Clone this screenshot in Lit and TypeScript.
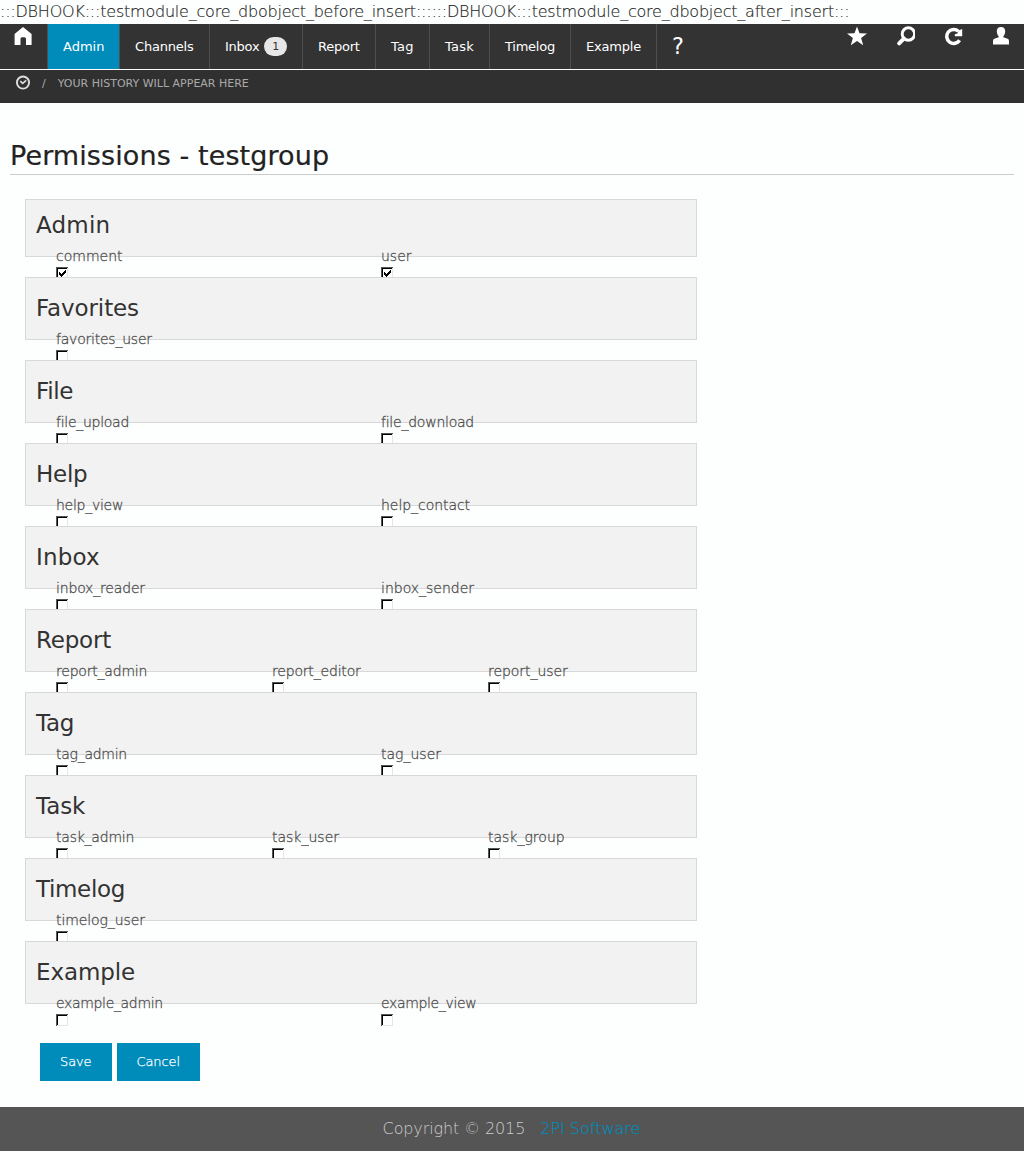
import { LitElement, html, css, svg } from "lit";
import { customElement, property } from "lit/decorators.js";
import { classMap } from "lit/directives/class-map.js";
import { styleMap } from "lit/directives/style-map.js";

interface NavItem { label: string; width: number; tracking: number; badge?: number; active?: boolean; }
interface Permission { name: string; tracking: number; granted: boolean; }
interface Group { title: string; tracking: number; permissions: Permission[]; }

const NAV: NavItem[] = [
  { label: "Admin", width: 72, tracking: 0, active: true },
  { label: "Channels", width: 90, tracking: -0.2 },
  { label: "Inbox", width: 93, tracking: -0.25, badge: 1 },
  { label: "Report", width: 73, tracking: -0.25 },
  { label: "Tag", width: 54, tracking: 0.3 },
  { label: "Task", width: 60, tracking: 0.2 },
  { label: "Timelog", width: 81, tracking: -0.25 },
  { label: "Example", width: 86, tracking: -0.2 },
];

const group = (title: string, tracking: number, entries: [string, number][], granted = false): Group => ({
  title,
  tracking,
  permissions: entries.map(([name, spacing]) => ({ name, tracking: spacing, granted })),
});

const GROUPS: Group[] = [
  group("Admin", 0.2, [["comment", 0], ["user", 0]], true),
  group("Favorites", -0.1, [["favorites_user", -0.22]]),
  group("File", -0.35, [["file_upload", -0.27], ["file_download", -0.23]]),
  group("Help", -0.25, [["help_view", -0.27], ["help_contact", -0.05]]),
  group("Inbox", 0.2, [["inbox_reader", -0.17], ["inbox_sender", 0]]),
  group("Report", -0.2, [["report_admin", -0.2], ["report_editor", -0.18], ["report_user", -0.05]]),
  group("Tag", -0.3, [["tag_admin", -0.27], ["tag_user", 0]]),
  group("Task", -0.1, [["task_admin", -0.22], ["task_user", 0], ["task_group", 0]]),
  group("Timelog", -0.35, [["timelog_user", -0.1]]),
  group("Example", -0.1, [["example_admin", -0.33], ["example_view", -0.35]]),
];

const ICONS: Record<string, unknown> = {
  home: svg`<path d="M10 1 L18.6 8 V19 H13 V13 Q13 11.2 11.5 11.2 H9 Q7.5 11.2 7.5 13 V19 H1.6 V8 Z"/>`,
  star: svg`<path d="M10 .4 L12.5 7.3 L20 7.5 L14.1 12 L16.2 19.3 L10 15.1 L3.8 19.3 L5.9 12 L0 7.5 L7.5 7.3 Z"/>`,
  search: svg`<circle cx="13.4" cy="8" r="6.2" fill="none" stroke="currentColor" stroke-width="2.9"/><path d="M8.8 12.6 L4.2 17.4" stroke="currentColor" stroke-width="3.9" stroke-linecap="round"/>`,
  refresh: svg`<path d="M16.6 14.2 A7 7 0 1 1 15.4 5.2" fill="none" stroke="currentColor" stroke-width="3.5"/><path d="M19.2 3 V10.2 H11.8 V8.2 L14.4 7.4 L15.6 4.4 Z"/>`,
  user: svg`<path d="M10 1 C12.9 1 14.3 2.9 14.2 5.4 C14.1 7.6 13.2 9.3 12.3 10.4 V11.2 L16.6 12.7 Q18 13.3 18 15 V18.6 H2 V15 Q2 13.3 3.4 12.7 L7.7 11.2 V10.4 C6.8 9.3 5.9 7.6 5.8 5.4 C5.7 2.9 7.1 1 10 1 Z"/>`,
  clock: svg`<circle cx="10" cy="9.4" r="7.6" fill="none" stroke="currentColor" stroke-width="2.4"/><path d="M6.6 7.6 L9.6 10.4 L14 6.6" fill="none" stroke="currentColor" stroke-width="2.1"/>`,
};

const icon = (name: string) =>
  html`<svg class="icon" viewBox="0 0 20 20" fill="currentColor" aria-hidden="true">${ICONS[name]}</svg>`;

const tracked = (value: number) => styleMap({ letterSpacing: `${value}px` });

@customElement("permission-box")
export class PermissionBox extends LitElement {
  @property({ type: Boolean }) checked = false;

  static styles = css`
    :host { display: block; width: 12px; height: 12px; }
    .box { display: block; }
  `;

  render() {
    return html`<svg class="box" width="12" height="12" shape-rendering="crispEdges">
      <rect width="12" height="12" fill="#e5e5e5" />
      <path d="M0 0H12V1H1V12H0Z" fill="#555" />
      <path d="M1 1H11V2H2V11H1Z" fill="#000" />
      <rect x="2" y="2" width="9" height="9" fill="#fff" />
      ${this.checked
        ? svg`<path d="M3 5H4V6H5V7H6V6H7V5H8V4H9V3H10V6H9V7H8V8H7V9H6V10H5V9H4V8H3Z" fill="#000"/>`
        : null}
    </svg>`;
  }
}

@customElement("app-root")
export class AppRoot extends LitElement {
  static styles = css`
    :host {
      display: block;
      height: 1151px;
      background: #fdfffe;
      color: #222;
      font-family: "DejaVu Sans", sans-serif;
      font-size: 16px;
    }
    * { box-sizing: border-box; }
    .page { display: flex; flex-direction: column; height: 100%; }
    .hook {
      height: 24px; line-height: 24px; font-weight: 200; white-space: nowrap;
      letter-spacing: -0.22px; -webkit-text-stroke: 0.15px #222;
    }
    .topbar { display: flex; height: 45px; background: #333; color: #fff; }
    .icon { display: block; width: 20px; height: 20px; }
    .home { width: 48px; padding: 2px 0 0 13px; border-right: 1px solid #4e4e4e; }
    .item {
      display: flex; flex: none; align-items: center; height: 45px; padding-left: 15px;
      border-right: 1px solid #4e4e4e; font-size: 13px; white-space: nowrap;
    }
    .item.active { background: #008cba; }
    .badge {
      margin-left: 5px; width: 23px; height: 19px; border-radius: 10px; background: #e7e7e7;
      color: #333; font-size: 11px; line-height: 20px; text-align: center;
    }
    .help { padding: 0 16px 0 15px; font-size: 22.5px; line-height: 45px; }
    .tools { display: flex; gap: 28px; margin-left: auto; padding: 2px 13px 0 0; }
    .history {
      display: flex; height: 34px; padding: 5px 0 0 15px; border-top: 1px solid #fdfffe;
      background: #303030; color: #aaa; font-size: 11px; line-height: 17px;
    }
    .history .icon { width: 16px; height: 16px; color: #ddd; }
    .slash { margin: 0 12px 0 11px; }
    .content { flex: 1; padding: 36px 10px 0; }
    .heading {
      margin: 0 0 24px; height: 36px; border-bottom: 1px solid #ccc;
      font-size: 27px; line-height: 33px; font-weight: 400; letter-spacing: 0.1px;
      -webkit-text-stroke: 0.2px #222;
    }
    .groups { display: flex; flex-direction: column; gap: 20px; width: 672px; margin-left: 15px; }
    .group {
      position: relative; height: 63px; padding: 14px 0 0 10px;
      border: 1px solid #d8d8d8; background: #f2f2f2;
    }
    .group:first-child { height: 58px; padding-top: 9px; }
    .title { margin: 0; height: 32px; font-size: 23px; line-height: 32px; font-weight: 400; color: #333; }
    .list {
      display: grid; grid-auto-flow: column; grid-auto-columns: 1fr; width: 650px;
      margin: 5px 0 0 10px; padding: 0; list-style: none;
    }
    .list.thirds { grid-auto-columns: 216px; }
    .entry { padding-left: 10px; }
    .label {
      height: 21px; font-size: 14px; line-height: 21px; font-weight: 200; color: #4d4d4d;
      -webkit-text-stroke: 0.28px #4d4d4d;
    }
    .actions { display: flex; gap: 5px; margin: 39px 0 0 30px; }
    .button {
      height: 38px; padding: 0 20px; border: 0; background: #008cba; color: #fff;
      font: 200 13px/38px "DejaVu Sans", sans-serif; letter-spacing: -0.1px;
      -webkit-text-stroke: 0.25px #fff;
    }
    .footer {
      display: flex; justify-content: center; gap: 15px; height: 44px; padding-right: 1px;
      background: #555; color: #ccc; line-height: 43px; font-weight: 200; letter-spacing: -0.12px;
    }
    .company { color: #008cba; letter-spacing: 0; -webkit-text-stroke: 0.2px #008cba; }
  `;

  render() {
    return html`<div class="page">
      <div class="hook">:::DBHOOK:::testmodule_core_dbobject_before_insert::::::DBHOOK:::testmodule_core_dbobject_after_insert:::</div>
      <nav class="topbar">
        <div class="home">${icon("home")}</div>
        ${NAV.map((n) => html`<div class=${classMap({ item: true, active: !!n.active })} style=${styleMap({ width: `${n.width}px` })}>
          <span style=${tracked(n.tracking)}>${n.label}</span>${n.badge ? html`<span class="badge">${n.badge}</span>` : null}
        </div>`)}
        <div class="help">?</div>
        <div class="tools">${["star", "search", "refresh", "user"].map(icon)}</div>
      </nav>
      <div class="history">${icon("clock")}<span class="slash">/</span><span>YOUR HISTORY WILL APPEAR HERE</span></div>
      <main class="content">
        <h1 class="heading">Permissions - testgroup</h1>
        <div class="groups">
          ${GROUPS.map((g) => html`<section class="group">
            <h2 class="title" style=${tracked(g.tracking)}>${g.title}</h2>
            <ul class=${classMap({ list: true, thirds: g.permissions.length === 3 })}>
              ${g.permissions.map((p) => html`<li class="entry">
                <div class="label" style=${tracked(p.tracking)}>${p.name}</div>
                <permission-box .checked=${p.granted}></permission-box>
              </li>`)}
            </ul>
          </section>`)}
        </div>
        <div class="actions"><button class="button">Save</button><button class="button">Cancel</button></div>
      </main>
      <footer class="footer"><span>Copyright © 2015</span><span class="company">2PI Software</span></footer>
    </div>`;
  }
}
